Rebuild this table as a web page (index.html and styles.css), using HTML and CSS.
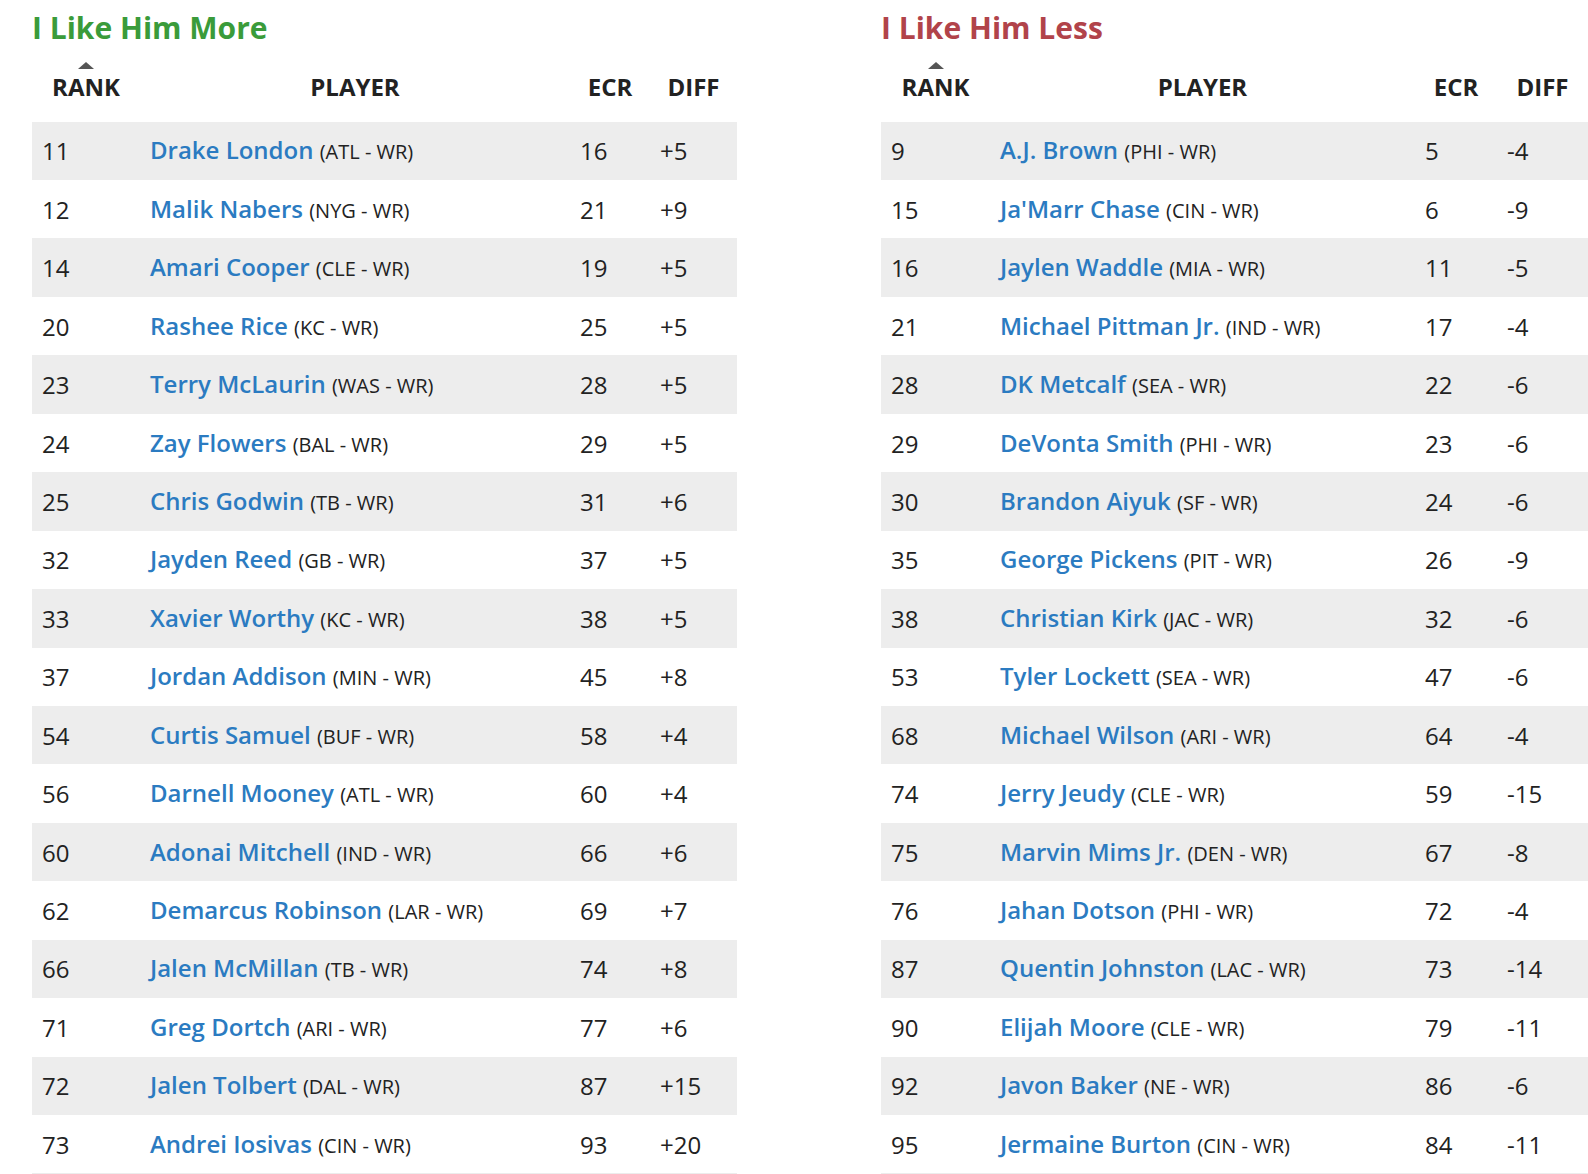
FILE: index.html
```html
<!DOCTYPE html>
<html lang="en">
<head>
<meta charset="utf-8">
<title>I Like Him More / Less</title>
<link rel="stylesheet" href="styles.css">
</head>
<body>
<div class="page">
  <section class="panel panel-more">
    <h2 class="title title-more">I Like Him More</h2>
    <table class="ranks">
      <colgroup>
        <col class="c-rank"><col class="c-player"><col class="c-ecr"><col class="c-diff">
      </colgroup>
      <thead>
        <tr>
          <th><span class="sort-arrow"></span>RANK</th>
          <th>PLAYER</th>
          <th>ECR</th>
          <th>DIFF</th>
        </tr>
      </thead>
      <tbody>
        <tr><td>11</td><td><a class="name">Drake London</a> <span class="team">(ATL - WR)</span></td><td>16</td><td>+5</td></tr>
        <tr><td>12</td><td><a class="name">Malik Nabers</a> <span class="team">(NYG - WR)</span></td><td>21</td><td>+9</td></tr>
        <tr><td>14</td><td><a class="name">Amari Cooper</a> <span class="team">(CLE - WR)</span></td><td>19</td><td>+5</td></tr>
        <tr><td>20</td><td><a class="name">Rashee Rice</a> <span class="team">(KC - WR)</span></td><td>25</td><td>+5</td></tr>
        <tr><td>23</td><td><a class="name">Terry McLaurin</a> <span class="team">(WAS - WR)</span></td><td>28</td><td>+5</td></tr>
        <tr><td>24</td><td><a class="name">Zay Flowers</a> <span class="team">(BAL - WR)</span></td><td>29</td><td>+5</td></tr>
        <tr><td>25</td><td><a class="name">Chris Godwin</a> <span class="team">(TB - WR)</span></td><td>31</td><td>+6</td></tr>
        <tr><td>32</td><td><a class="name">Jayden Reed</a> <span class="team">(GB - WR)</span></td><td>37</td><td>+5</td></tr>
        <tr><td>33</td><td><a class="name">Xavier Worthy</a> <span class="team">(KC - WR)</span></td><td>38</td><td>+5</td></tr>
        <tr><td>37</td><td><a class="name">Jordan Addison</a> <span class="team">(MIN - WR)</span></td><td>45</td><td>+8</td></tr>
        <tr><td>54</td><td><a class="name">Curtis Samuel</a> <span class="team">(BUF - WR)</span></td><td>58</td><td>+4</td></tr>
        <tr><td>56</td><td><a class="name">Darnell Mooney</a> <span class="team">(ATL - WR)</span></td><td>60</td><td>+4</td></tr>
        <tr><td>60</td><td><a class="name">Adonai Mitchell</a> <span class="team">(IND - WR)</span></td><td>66</td><td>+6</td></tr>
        <tr><td>62</td><td><a class="name">Demarcus Robinson</a> <span class="team">(LAR - WR)</span></td><td>69</td><td>+7</td></tr>
        <tr><td>66</td><td><a class="name">Jalen McMillan</a> <span class="team">(TB - WR)</span></td><td>74</td><td>+8</td></tr>
        <tr><td>71</td><td><a class="name">Greg Dortch</a> <span class="team">(ARI - WR)</span></td><td>77</td><td>+6</td></tr>
        <tr><td>72</td><td><a class="name">Jalen Tolbert</a> <span class="team">(DAL - WR)</span></td><td>87</td><td>+15</td></tr>
        <tr><td>73</td><td><a class="name">Andrei Iosivas</a> <span class="team">(CIN - WR)</span></td><td>93</td><td>+20</td></tr>
      </tbody>
    </table>
  </section>

  <section class="panel panel-less">
    <h2 class="title title-less">I Like Him Less</h2>
    <table class="ranks">
      <colgroup>
        <col class="c-rank"><col class="c-player"><col class="c-ecr"><col class="c-diff">
      </colgroup>
      <thead>
        <tr>
          <th><span class="sort-arrow"></span>RANK</th>
          <th>PLAYER</th>
          <th>ECR</th>
          <th>DIFF</th>
        </tr>
      </thead>
      <tbody>
        <tr><td>9</td><td><a class="name">A.J. Brown</a> <span class="team">(PHI - WR)</span></td><td>5</td><td>-4</td></tr>
        <tr><td>15</td><td><a class="name">Ja'Marr Chase</a> <span class="team">(CIN - WR)</span></td><td>6</td><td>-9</td></tr>
        <tr><td>16</td><td><a class="name">Jaylen Waddle</a> <span class="team">(MIA - WR)</span></td><td>11</td><td>-5</td></tr>
        <tr><td>21</td><td><a class="name">Michael Pittman Jr.</a> <span class="team">(IND - WR)</span></td><td>17</td><td>-4</td></tr>
        <tr><td>28</td><td><a class="name">DK Metcalf</a> <span class="team">(SEA - WR)</span></td><td>22</td><td>-6</td></tr>
        <tr><td>29</td><td><a class="name">DeVonta Smith</a> <span class="team">(PHI - WR)</span></td><td>23</td><td>-6</td></tr>
        <tr><td>30</td><td><a class="name">Brandon Aiyuk</a> <span class="team">(SF - WR)</span></td><td>24</td><td>-6</td></tr>
        <tr><td>35</td><td><a class="name">George Pickens</a> <span class="team">(PIT - WR)</span></td><td>26</td><td>-9</td></tr>
        <tr><td>38</td><td><a class="name">Christian Kirk</a> <span class="team">(JAC - WR)</span></td><td>32</td><td>-6</td></tr>
        <tr><td>53</td><td><a class="name">Tyler Lockett</a> <span class="team">(SEA - WR)</span></td><td>47</td><td>-6</td></tr>
        <tr><td>68</td><td><a class="name">Michael Wilson</a> <span class="team">(ARI - WR)</span></td><td>64</td><td>-4</td></tr>
        <tr><td>74</td><td><a class="name">Jerry Jeudy</a> <span class="team">(CLE - WR)</span></td><td>59</td><td>-15</td></tr>
        <tr><td>75</td><td><a class="name">Marvin Mims Jr.</a> <span class="team">(DEN - WR)</span></td><td>67</td><td>-8</td></tr>
        <tr><td>76</td><td><a class="name">Jahan Dotson</a> <span class="team">(PHI - WR)</span></td><td>72</td><td>-4</td></tr>
        <tr><td>87</td><td><a class="name">Quentin Johnston</a> <span class="team">(LAC - WR)</span></td><td>73</td><td>-14</td></tr>
        <tr><td>90</td><td><a class="name">Elijah Moore</a> <span class="team">(CLE - WR)</span></td><td>79</td><td>-11</td></tr>
        <tr><td>92</td><td><a class="name">Javon Baker</a> <span class="team">(NE - WR)</span></td><td>86</td><td>-6</td></tr>
        <tr><td>95</td><td><a class="name">Jermaine Burton</a> <span class="team">(CIN - WR)</span></td><td>84</td><td>-11</td></tr>
      </tbody>
    </table>
  </section>
</div>
</body>
</html>
```

FILE: styles.css
```css
html, body {
  margin: 0;
  padding: 0;
  background: #ffffff;
}

body {
  font-family: "Open Sans", "Liberation Sans", sans-serif;
  color: #222222;
  overflow: hidden;
}

.page {
  display: flex;
  gap: 144px;
  padding: 10px 0 0 32px;
}

.panel-more {
  flex: 0 0 705px;
}

.panel-less {
  flex: 0 0 707px;
}

.title {
  margin: 0 0 16px 0;
  font-size: 30px;
  line-height: 36px;
  font-weight: 700;
}

.title-more {
  color: #3a9b3a;
}

.title-less {
  color: #b1434a;
}

.ranks {
  width: 100%;
  table-layout: fixed;
  border-collapse: collapse;
  border-spacing: 0;
}

.panel-more .c-rank { width: 108px; }
.panel-more .c-player { width: 430px; }
.panel-more .c-ecr { width: 80px; }
.panel-more .c-diff { width: 87px; }

.panel-less .c-rank { width: 109px; }
.panel-less .c-player { width: 425px; }
.panel-less .c-ecr { width: 82px; }
.panel-less .c-diff { width: 91px; }

.ranks th {
  padding: 0 10px 18px 10px;
  font-size: 24px;
  line-height: 33.6px;
  font-weight: 700;
  color: #222222;
  text-align: center;
  vertical-align: bottom;
  white-space: nowrap;
}

.sort-arrow {
  display: block;
  width: 0;
  height: 0;
  margin: 0 auto 1px auto;
  border-left: 8px solid transparent;
  border-right: 8px solid transparent;
  border-bottom: 7px solid #555555;
}

.ranks td {
  height: 58.44px;
  padding: 0 10px;
  box-sizing: border-box;
  font-size: 24px;
  line-height: 33px;
  vertical-align: middle;
  text-align: left;
  white-space: nowrap;
  color: #222222;
}

.ranks tbody tr:nth-child(odd) td {
  background: #ededed;
}

.ranks tbody tr:last-child td {
  border-bottom: 1px solid #ececec;
}

.name {
  color: #2b7bc1;
  font-weight: 600;
  text-decoration: none;
}

.team {
  font-size: 20px;
  color: #222222;
}
```
